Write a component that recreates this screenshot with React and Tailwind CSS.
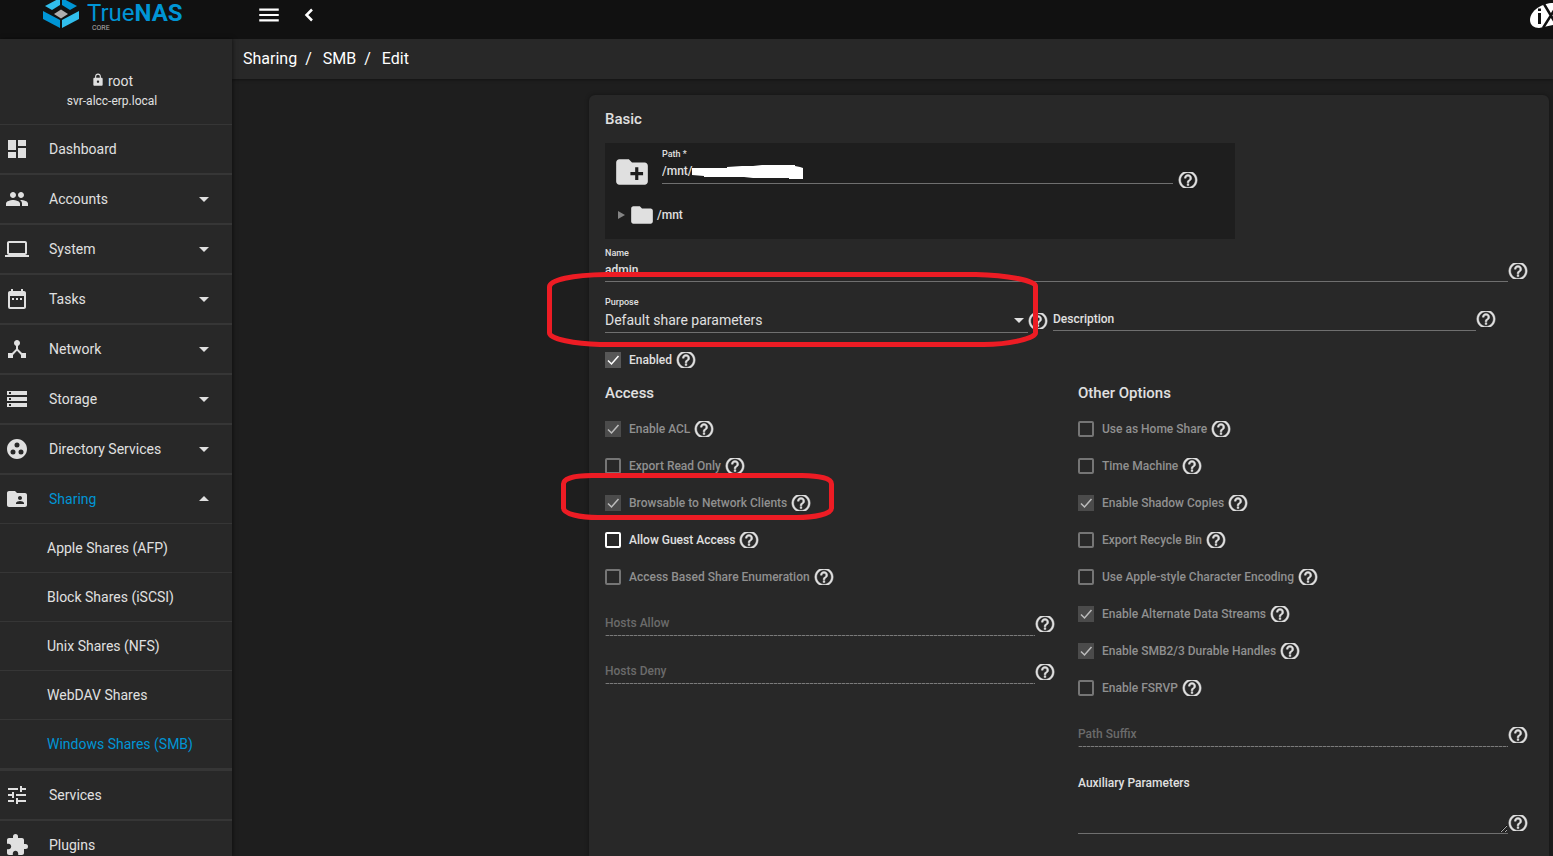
import { useState } from 'react';
import {
  MdArrowDropDown,
  MdArrowDropUp,
  MdCreateNewFolder,
  MdDashboard,
  MdDateRange,
  MdDeviceHub,
  MdExtension,
  MdFolder,
  MdFolderShared,
  MdGroupWork,
  MdLaptop,
  MdLock,
  MdMenu,
  MdPeople,
  MdStorage,
  MdTune,
} from 'react-icons/md';

const shares = [
  'Apple Shares (AFP)',
  'Block Shares (iSCSI)',
  'Unix Shares (NFS)',
  'WebDAV Shares',
  'Windows Shares (SMB)',
];

const nav = [
  { label: 'Dashboard', icon: MdDashboard },
  { label: 'Accounts', icon: MdPeople, menu: true },
  { label: 'System', icon: MdLaptop, menu: true },
  { label: 'Tasks', icon: MdDateRange, menu: true },
  { label: 'Network', icon: MdDeviceHub, menu: true },
  { label: 'Storage', icon: MdStorage, menu: true },
  { label: 'Directory Services', icon: MdGroupWork, menu: true },
  { label: 'Sharing', icon: MdFolderShared, menu: true, children: shares },
  { label: 'Services', icon: MdTune },
  { label: 'Plugins', icon: MdExtension },
];

const accessOptions = [
  { label: 'Enable ACL', checked: true, disabled: true },
  { label: 'Export Read Only', disabled: true },
  { label: 'Browsable to Network Clients', checked: true, disabled: true },
  { label: 'Allow Guest Access' },
  { label: 'Access Based Share Enumeration', disabled: true },
];

const otherOptions = [
  { label: 'Use as Home Share', disabled: true },
  { label: 'Time Machine', disabled: true },
  { label: 'Enable Shadow Copies', checked: true, disabled: true },
  { label: 'Export Recycle Bin', disabled: true },
  { label: 'Use Apple-style Character Encoding', disabled: true },
  { label: 'Enable Alternate Data Streams', checked: true, disabled: true },
  { label: 'Enable SMB2/3 Durable Handles', checked: true, disabled: true },
  { label: 'Enable FSRVP', disabled: true },
];

function Logo() {
  return (
    <a href="#home" className="flex h-full w-[233px] shrink-0 items-start pl-[43px]">
      <svg width="36" height="29" viewBox="0 0 36 29" className="shrink-0">
        <path d="M17 -2V5L9 10L2 6Z" fill="#31beec" />
        <path d="M19 -2V5L27 10L34 6Z" fill="#0095d5" />
        <path d="M0 11L17 20V28L0 19Z" fill="#0095d5" />
        <path d="M36 11L19 20V28L36 19Z" fill="#31beec" />
        <path d="M18 9.500L25 14L18 18.500L11 14Z" fill="#aeaeae" />
      </svg>
      <span className="ml-2 flex flex-col">
        <span className="h-6 text-2xl leading-[26px] text-[#0095d5]">
          True<span className="font-bold">NAS</span>
        </span>
        <span className="pl-[5px] text-[7px] leading-[8px] text-[#aeaeae]">CORE</span>
      </span>
    </a>
  );
}

function TopBar() {
  return (
    <header className="flex h-[39px] shrink-0 overflow-hidden bg-[#111111] text-white">
      <Logo />
      <div className="flex h-[30px] flex-1 items-center pl-[23px]">
        <button aria-label="Toggle menu">
          <MdMenu size={26} />
        </button>
        <button aria-label="Collapse" className="ml-[15px]">
          <svg width="24" height="24" viewBox="0 0 24 24" fill="none" stroke="currentColor" strokeWidth="2.500">
            <path d="M15 6.500L9.500 12L15 17.500" />
          </svg>
        </button>
      </div>
      <svg width="24" height="30" viewBox="0 0 24 30" className="shrink-0">
        <path d="M24 3C14 3 1 10 1 20C1 25 5 28 10 28L24 25Z" fill="#ffffff" />
        <path d="M10.500 13V24" stroke="#111111" strokeWidth="3" />
        <path d="M10.500 8.500V11" stroke="#111111" strokeWidth="3" />
        <path d="M15 4L27 24M26 9L14 28" stroke="#111111" strokeWidth="2.500" />
      </svg>
    </header>
  );
}

function NavItem({ item }) {
  const Icon = item.icon;
  const Arrow = item.children ? MdArrowDropUp : MdArrowDropDown;
  return (
    <li className="border-b-2 border-[#363636]">
      <a href="#nav" className="flex h-12 items-center pl-[5px] pr-4">
        <Icon size={24} className="shrink-0" />
        <span className={`ml-5 flex-1 ${item.children ? 'text-[#0095d5]' : ''}`}>{item.label}</span>
        {item.menu && <Arrow size={24} />}
      </a>
      {item.children && (
        <ul className="border-t border-[#363636]">
          {item.children.map((name) => (
            <li key={name} className="border-b border-[#363636]">
              <a
                href="#share"
                className={`flex h-12 items-center pl-[47px] ${name === 'Windows Shares (SMB)' ? 'text-[#0095d5]' : ''}`}
              >
                {name}
              </a>
            </li>
          ))}
        </ul>
      )}
    </li>
  );
}

function Sidebar() {
  return (
    <aside className="z-10 w-[232px] shrink-0 overflow-hidden bg-[#282828] text-sm text-[#e0e0e0] shadow-[1px_0_4px_rgba(0,0,0,0.5)]">
      <div className="flex h-[86px] flex-col items-center border-b border-[#363636] pr-2 pt-8">
        <div className="flex h-5 items-center gap-[3px]">
          <MdLock size={14} className="mb-[2px]" />
          <span>root</span>
        </div>
        <div className="text-xs leading-5">svr-alcc-erp.local</div>
      </div>
      <nav>
        <ul>
          {nav.map((item) => (
            <NavItem key={item.label} item={item} />
          ))}
        </ul>
      </nav>
    </aside>
  );
}

function Help({ className = '' }) {
  return (
    <button
      type="button"
      aria-label="Help"
      className={`flex h-[22px] w-5 shrink-0 items-center justify-center ${className}`}
    >
      <svg width="22" height="16" viewBox="0 3.270 24 17.460" className="shrink-0" fill="currentColor">
        <path
          d="M11 18h2v-2h-2v2zm1-16C6.480 2 2 6.480 2 12s4.480 10 10 10 10-4.480 10-10S17.520 2 12 2zm0 18c-4.410 0-8-3.590-8-8s3.590-8 8-8 8 3.590 8 8-3.590 8-8 8zm0-14c-2.210 0-4 1.790-4 4h2c0-1.100.9-2 2-2s2 .9 2 2c0 2-3 1.750-3 5h2c0-2.250 3-2.500 3-5 0-2.210-1.790-4-4-4z"
          stroke="currentColor"
          strokeWidth="0.500"
        />
      </svg>
    </button>
  );
}

function Field({ id, label, value, className = '' }) {
  return (
    <div className={`flex flex-1 items-end ${className}`}>
      <div className="flex flex-1 flex-col">
        <label htmlFor={id} className="text-[9px] leading-3">{label}</label>
        <input
          id={id}
          defaultValue={value}
          className="h-[23px] w-full border-b border-[#6f6f6f] bg-transparent outline-none"
        />
      </div>
      <Help />
    </div>
  );
}

function DisabledField({ label }) {
  return (
    <div className="mt-6 flex items-end">
      <input
        aria-label={label}
        placeholder={label}
        disabled
        className="h-6 min-w-0 flex-1 bg-[linear-gradient(to_right,#7a7a7a_75%,#484848_0)] bg-[length:4px_1px] bg-bottom bg-repeat-x pb-[2px] placeholder:text-[#6b6b6b]"
      />
      <Help className="mb-px" />
    </div>
  );
}

function Checkbox({ label, checked = false, disabled = false }) {
  const [on, setOn] = useState(checked);
  return (
    <div className="flex h-[22px] items-center">
      <label className={`flex items-center gap-2 ${disabled ? 'text-[#909090]' : ''}`}>
        <span className="grid size-4">
          <input
            type="checkbox"
            checked={on}
            disabled={disabled}
            onChange={(e) => setOn(e.target.checked)}
            className="col-start-1 row-start-1 size-4 appearance-none rounded-[2px] border-2 border-white checked:rounded-none checked:border-0 checked:bg-[#575757] disabled:border-[#757575] disabled:checked:bg-[#4b4b4b]"
          />
          {on && (
            <svg viewBox="0 0 16 16" className="pointer-events-none col-start-1 row-start-1 size-4">
              <path
                d="M3 8.500L6.500 12L13.500 4"
                fill="none"
                stroke={disabled ? '#bdbdbd' : '#ffffff'}
                strokeWidth="1.500"
              />
            </svg>
          )}
        </span>
        <span>{label}</span>
      </label>
      <span className="ml-1 flex">
        <Help />
      </span>
    </div>
  );
}

function PathExplorer() {
  return (
    <div className="h-24 w-[630px] bg-[#1e1e1e] pl-2 pr-[37px] pt-[5px]">
      <div className="flex">
        <MdCreateNewFolder size={38} className="mt-[5px] shrink-0" />
        <div className="relative ml-[11px] flex-1">
          <label htmlFor="path" className="block text-[9px] leading-3">Path *</label>
          <input
            id="path"
            defaultValue="/mnt/"
            className="block h-6 w-full border-b border-[#6f6f6f] bg-transparent pb-[2px] outline-none"
          />
          <svg width="112" height="16" viewBox="0 0 112 16" className="absolute left-[30px] top-4">
            <path
              d="M0 4H35V3L50 2H61L70 1H103V2L108 3L111 4V15H97V14H61L52 13H12V12L0 11Z"
              fill="#ffffff"
            />
          </svg>
        </div>
        <div className="ml-[5px] mt-[21px]">
          <Help />
        </div>
      </div>
      <div className="mt-[11px] flex items-center pl-1">
        <svg width="8" height="8" viewBox="0 0 8 8" className="ml-px">
          <path d="M0 0L7 4L0 8Z" fill="#848484" />
        </svg>
        <MdFolder size={26} className="ml-[3px]" />
        <span className="ml-[2px]">/mnt</span>
      </div>
    </div>
  );
}

function ShareForm() {
  return (
    <form className="ml-auto mr-1 mt-4 h-full w-full max-w-[960px] rounded-t-md bg-[#282828] p-4 text-xs font-medium shadow-[0_0_4px_rgba(0,0,0,0.4)]">
      <h2 className="mb-4 text-[15px] leading-4">Basic</h2>
      <PathExplorer />
      <Field id="name" label="Name" value="admin" className="mt-2 pr-[5px]" />

      <div className="mt-[14px] flex items-end gap-[5px] pr-[37px]">
        <div className="flex flex-1 items-end">
          <div className="flex flex-1 flex-col">
            <label htmlFor="purpose" className="text-[9px] leading-3">Purpose</label>
            <div className="grid">
              <select
                id="purpose"
                className="col-start-1 row-start-1 h-[25px] w-full appearance-none border-b border-[#6f6f6f] bg-transparent text-sm font-normal outline-none"
              >
                <option>Default share parameters</option>
              </select>
              <svg
                width="10"
                height="5"
                viewBox="0 0 10 5"
                className="pointer-events-none col-start-1 row-start-1 mr-1 self-center justify-self-end"
              >
                <path d="M0 0H10L5 5Z" fill="currentColor" />
              </svg>
            </div>
          </div>
          <Help className="mb-px" />
        </div>
        <div className="mb-[2px] flex flex-1 items-end">
          <input
            aria-label="Description"
            placeholder="Description"
            className="h-6 min-w-0 flex-1 border-b border-[#6f6f6f] bg-transparent outline-none placeholder:text-[#e0e0e0]"
          />
          <Help className="mb-px" />
        </div>
      </div>

      <div className="mt-4">
        <Checkbox label="Enabled" checked />
      </div>

      <div className="mt-[14px] grid grid-cols-2 gap-[23px] pr-[5px]">
        <section>
          <h2 className="text-[15px] leading-4">Access</h2>
          <div className="mt-[17px] flex flex-col gap-[15px]">
            {accessOptions.map((o) => (
              <Checkbox key={o.label} {...o} />
            ))}
          </div>
          <DisabledField label="Hosts Allow" />
          <DisabledField label="Hosts Deny" />
        </section>
        <section>
          <h2 className="text-[15px] leading-4">Other Options</h2>
          <div className="mt-[17px] flex flex-col gap-[15px]">
            {otherOptions.map((o) => (
              <Checkbox key={o.label} {...o} />
            ))}
          </div>
          <DisabledField label="Path Suffix" />
          <div className="mt-7 flex items-end">
            <div className="flex flex-1 flex-col">
              <label htmlFor="aux" className="leading-4">Auxiliary Parameters</label>
              <textarea
                id="aux"
                className="block h-[43px] w-full resize border-b border-[#6f6f6f] bg-transparent outline-none"
              />
            </div>
            <Help />
          </div>
        </section>
      </div>
    </form>
  );
}

// Hand-drawn highlights around the two settings of interest
function Highlights() {
  return (
    <svg
      width="500"
      height="260"
      viewBox="540 266 500 260"
      fill="none"
      stroke="#ed1c24"
      strokeWidth="5"
      className="pointer-events-none absolute right-[513px] top-[266px] z-20"
    >
      <path d="M549.500 287C549.500 280 572 275 606 274.500H976C1008 275 1035.500 281 1035.500 286V333C1035.500 338 1010 344.500 984 344.500H600C575 344 549.500 339 549.500 333Z" />
      <path d="M563.500 484C563.500 478 575 475.500 592 475.500H802C820 476 831.500 478 831.500 484V508C831.500 514 815 517.500 796 517.500H598C580 517.500 563.500 514 563.500 508Z" />
    </svg>
  );
}

export default function App() {
  return (
    <div className="relative flex h-screen flex-col overflow-hidden bg-[#1e1e1e] font-['Roboto','Liberation_Sans',sans-serif] text-[#e0e0e0]">
      <TopBar />
      <div className="flex min-h-0 flex-1">
        <Sidebar />
        <main className="flex min-w-0 flex-1 flex-col overflow-hidden">
          <nav
            aria-label="Breadcrumb"
            className="flex h-10 shrink-0 items-center bg-[#282828] pl-[11px] text-base text-white shadow-[0_1px_3px_rgba(0,0,0,0.4)]"
          >
            <a href="#sharing">Sharing</a>
            <span className="ml-2 mr-[11px]">/</span>
            <a href="#smb">SMB</a>
            <span className="ml-2 mr-[11px]">/</span>
            <span>Edit</span>
          </nav>
          <ShareForm />
        </main>
      </div>
      <Highlights />
    </div>
  );
}
